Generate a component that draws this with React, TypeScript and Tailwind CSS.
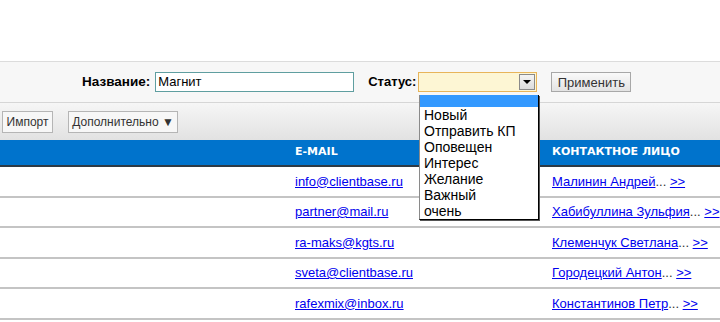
import React from "react";

const rows = [
  { email: "info@clientbase.ru", name: "Малинин Андрей" },
  { email: "partner@mail.ru", name: "Хабибуллина Зульфия" },
  { email: "ra-maks@kgts.ru", name: "Клеменчук Светлана" },
  { email: "sveta@clientbase.ru", name: "Городецкий Антон" },
  { email: "rafexmix@inbox.ru", name: "Константинов Петр" },
];

const statuses = ["Новый", "Отправить КП", "Оповещен", "Интерес", "Желание", "Важный", "очень"];

export default function App() {
  return (
    <div className="relative w-[720px] h-[322px] overflow-hidden bg-white text-[13px] text-black font-['Liberation_Sans',Arial,sans-serif]">
      {/* top blank area */}
      <div className="h-[62px] border-b border-[#dcdcdc]" />

      {/* filter bar */}
      <div className="h-[41px] bg-[#f7f7f7] border-b border-[#d6d6d6] flex items-center pl-[82px]">
        <span className="font-bold mr-[5px] text-[13.5px]">Название:</span>
        <div className="w-[199px] h-[20px] border border-[#5f9ea0] bg-white flex items-center px-[2px]">
          Магнит
        </div>
        <span className="font-bold ml-[14px] mr-[2px]">Статус:</span>
        <div className="w-[119px] h-[20px] border border-[#e8b55a] bg-[#fdf6d4] flex justify-end items-center pr-[1px]">
          <div className="w-[16px] h-[16px] border border-[#8a8a8a] bg-gradient-to-b from-[#f4f4f4] to-[#dcdcdc] flex items-center justify-center">
            <div className="w-0 h-0 border-l-[4px] border-r-[4px] border-t-[4px] border-l-transparent border-r-transparent border-t-black" />
          </div>
        </div>
        <button className="ml-[14px] w-[80px] h-[20px] border border-[#a8a8a8] bg-gradient-to-b from-[#fafafa] to-[#e3e3e3] text-[#333] text-[13px]">
          Применить
        </button>
      </div>

      {/* toolbar */}
      <div className="h-[37px] bg-gradient-to-b from-[#f6f6f6] to-[#e2e2e2] flex items-center pl-[2px] gap-[15px]">
        <button className="h-[22px] w-[51px] border border-[#b5b5b5] bg-[#f7f7f7] text-[#333] text-[12px]">
          Импорт
        </button>
        <button className="h-[22px] w-[110px] border border-[#b5b5b5] bg-[#f7f7f7] text-[#333] text-[12px]">
          Дополнительно ▼
        </button>
      </div>

      {/* table header */}
      <div className="h-[27px] bg-[#0073cc] border-b-[2px] border-[#2d3a45] grid grid-cols-[295px_257px_1fr] items-center text-white font-bold text-[11px] font-['DejaVu_Sans',Verdana,sans-serif]">
        <div />
        <div>E-MAIL</div>
        <div>КОНТАКТНОЕ ЛИЦО</div>
      </div>

      {/* table rows */}
      {rows.map((r) => (
        <div
          key={r.email}
          className="h-[30.5px] border-b-[2px] border-[#c4c4c4] grid grid-cols-[295px_257px_1fr] items-center"
        >
          <div />
          <div>
            <a className="text-[#0000ee] underline">{r.email}</a>
          </div>
          <div className="whitespace-nowrap">
            <a className="text-[#0000ee] underline">{r.name}</a>
            <span className="text-[#333]">... </span>
            <a className="text-[#0000ee] underline">&gt;&gt;</a>
          </div>
        </div>
      ))}

      {/* open select list */}
      <div className="absolute left-[419px] top-[95px] w-[120px] border border-black border-t-0 border-l-[#8a8a8a] bg-white text-[14px] leading-[16px] shadow-[1px_1px_0_#555]">
        <div className="h-[12px] bg-[#3399ff]" />
        {statuses.map((s) => (
          <div key={s} className="px-[4px]">
            {s}
          </div>
        ))}
      </div>
    </div>
  );
}
